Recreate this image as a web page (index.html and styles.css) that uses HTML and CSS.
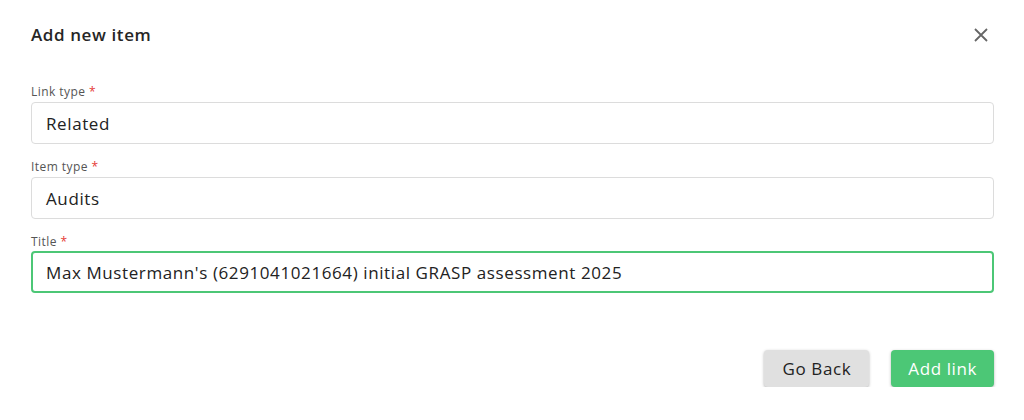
FILE: index.html
```html
<!DOCTYPE html>
<html lang="en">
<head>
<meta charset="utf-8">
<title>Add new item</title>
<link rel="stylesheet" href="styles.css">
</head>
<body>
<div class="dialog">
  <header class="dialog-header">
    <h2 class="dialog-title">Add new item</h2>
    <button class="close" aria-label="Close">
      <svg width="14" height="14" viewBox="0 0 14 14"><path d="M1 1L13 13M13 1L1 13" stroke="#666" stroke-width="1.8" fill="none"/></svg>
    </button>
  </header>
  <div class="fields">
    <div class="field">
      <label class="label">Link type <span class="req">*</span></label>
      <div class="input">Related</div>
    </div>
    <div class="field">
      <label class="label">Item type <span class="req">*</span></label>
      <div class="input">Audits</div>
    </div>
    <div class="field">
      <label class="label">Title <span class="req">*</span></label>
      <div class="input focused">Max Mustermann's (6291041021664) initial GRASP assessment 2025</div>
    </div>
  </div>
  <footer class="actions">
    <button class="btn btn-back">Go Back</button>
    <button class="btn btn-add">Add link</button>
  </footer>
</div>
</body>
</html>
```
FILE: styles.css
```css
* { box-sizing: border-box; }
html, body { margin: 0; background: #fff; }
body {
  font-family: "Open Sans", "Noto Sans", sans-serif;
  color: #222;
}
.dialog {
  padding: 0 30px 0 31px;
}
.dialog-header {
  display: flex;
  align-items: center;
  justify-content: space-between;
  height: 70px;
  padding-bottom: 1px;
}
.dialog-title {
  margin: 0;
  font-size: 17px;
  font-weight: 600;
  letter-spacing: 0.6px;
  color: #262626;
}
.close {
  border: 0;
  background: none;
  padding: 0;
  margin-right: 6px;
  display: flex;
  cursor: pointer;
}
.fields {
  display: flex;
  flex-direction: column;
  gap: 15px;
  padding-top: 14px;
}
.field {
  display: flex;
  flex-direction: column;
  gap: 2px;
}
.field:last-child { gap: 1px; }
.label {
  font-size: 12px;
  line-height: 16px;
  letter-spacing: 0.45px;
  color: #555;
}
.req { color: #e53935; }
.input {
  height: 42px;
  border: 1px solid #dcdcdc;
  border-radius: 4px;
  padding: 0 14px;
  display: flex;
  align-items: center;
  font-size: 17px;
  letter-spacing: 0.6px;
  color: #222;
}
.input.focused {
  border: 2px solid #4cc776;
  padding: 0 13px;
  height: 42px;
}
.actions {
  display: flex;
  justify-content: flex-end;
  gap: 22px;
  margin-top: 57px;
}
.btn {
  font-family: inherit;
  font-size: 17px;
  letter-spacing: 0.6px;
  height: 37px;
  border: 0;
  border-radius: 4px;
  padding: 0 17px;
  box-shadow: 0 1px 3px rgba(0,0,0,0.3);
}
.btn-back { background: #e0e0e0; color: #222; padding: 0 18px 0 19px; }
.btn-add { background: #4cc776; color: #fff; }
```
